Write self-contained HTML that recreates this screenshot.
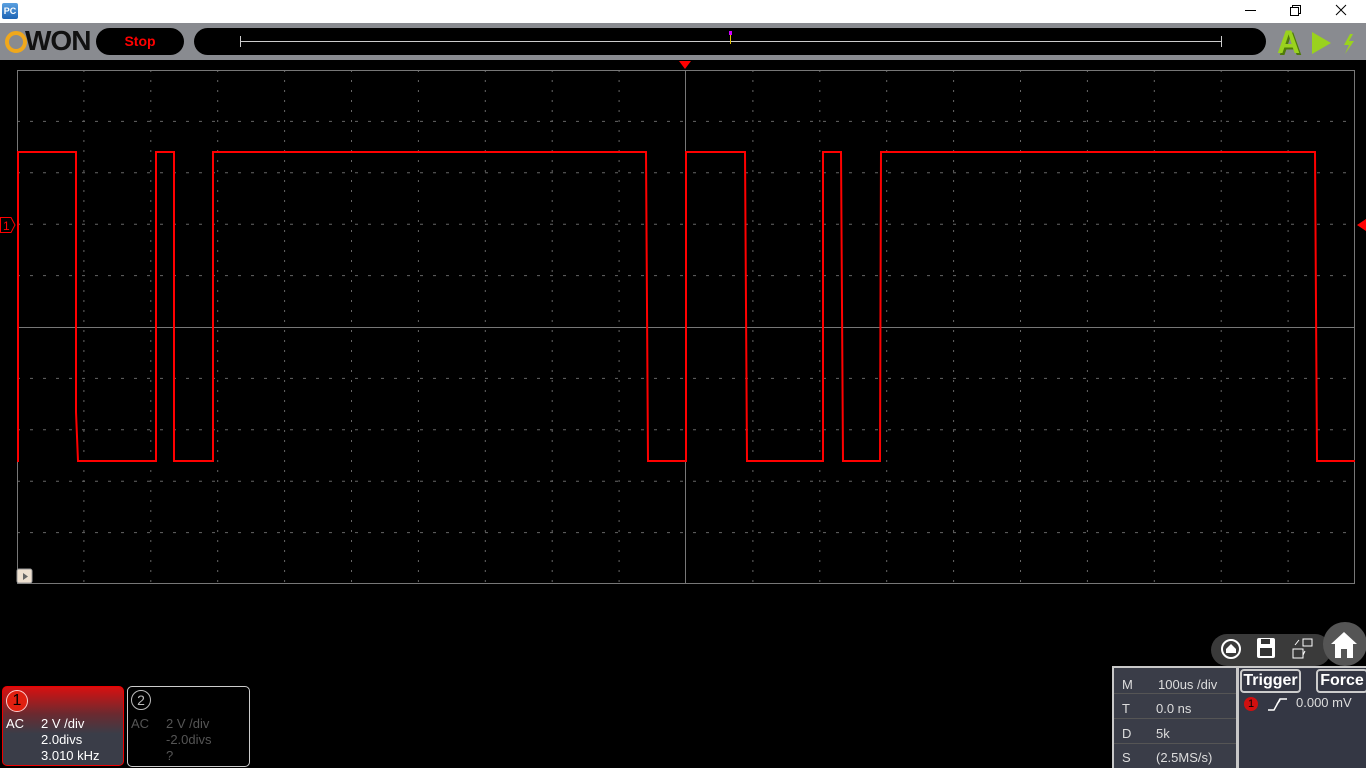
<!DOCTYPE html>
<html><head><meta charset="utf-8"><style>
body{margin:0;width:1366px;height:768px;background:#000;overflow:hidden;position:relative;font-family:"Liberation Sans",sans-serif}
.abs{position:absolute}
</style></head><body>
<!-- title bar -->
<div class="abs" style="left:0;top:0;width:1366px;height:23px;background:#fff"></div>
<div class="abs" style="left:2px;top:3px;width:16px;height:16px;background:linear-gradient(#5aa0e0,#1e64b4);border-radius:2px;color:#fff;font:bold 9px 'Liberation Sans';line-height:16px;text-align:center">PC</div>
<svg class="abs" style="left:1230px;top:0" width="136" height="23">
<line x1="15" y1="10.5" x2="26" y2="10.5" stroke="#000"/>
<rect x="60.5" y="7.5" width="8" height="8" fill="none" stroke="#000"/><path d="M62.5 7.5V5.5H70.5V13.5H68.5" fill="none" stroke="#000"/>
<path d="M106 5L116 15M116 5L106 15" stroke="#000"/>
</svg>
<!-- toolbar -->
<div class="abs" style="left:0;top:23px;width:1366px;height:37px;background:#898b90"></div>
<div class="abs" style="left:5px;top:31px;width:14px;height:14px;border:4px solid #f0a81c;border-radius:50%"></div>
<div class="abs" style="left:25px;top:25px;font:bold 28px 'Liberation Sans';color:#111;letter-spacing:-1px">WON</div>
<div class="abs" style="left:96px;top:28px;width:88px;height:27px;background:#000;border-radius:14px;color:#f00;font:bold 14px 'Liberation Sans';text-align:center;line-height:27px">Stop</div>
<div class="abs" style="left:194px;top:28px;width:1072px;height:27px;background:#000;border-radius:14px"></div>
<svg class="abs" style="left:230px;top:28px" width="1000" height="27">
<line x1="10" y1="13.5" x2="992" y2="13.5" stroke="#ccc"/>
<line x1="10.5" y1="8" x2="10.5" y2="19" stroke="#ccc"/><line x1="991.5" y1="8" x2="991.5" y2="19" stroke="#ccc"/>
<line x1="500.5" y1="4" x2="500.5" y2="16" stroke="#e0c000"/><rect x="499" y="3" width="3" height="4" fill="#c0f"/>
</svg>
<div class="abs" style="left:1277px;top:24px;font:bold 32px 'Liberation Sans';color:#9ad21e;text-shadow:2px 2px 0 #4f7a0a">A</div>
<svg class="abs" style="left:1310px;top:30px" width="56" height="26">
<path d="M2 2L21 13L2 24Z" fill="#9ad21e"/>
<path d="M40 4L34 15H39L35 24L44 11H39L43 4Z" fill="#9ad21e"/>
</svg>
<!-- scope screen -->
<svg class="abs" style="left:0;top:60px" width="1366" height="540">
<g stroke="#666" stroke-width="1" stroke-dasharray="2 8">
<line x1="83.9" y1="10" x2="83.9" y2="524"/><line x1="150.8" y1="10" x2="150.8" y2="524"/><line x1="217.7" y1="10" x2="217.7" y2="524"/><line x1="284.6" y1="10" x2="284.6" y2="524"/><line x1="351.5" y1="10" x2="351.5" y2="524"/><line x1="418.4" y1="10" x2="418.4" y2="524"/><line x1="485.3" y1="10" x2="485.3" y2="524"/><line x1="552.2" y1="10" x2="552.2" y2="524"/><line x1="619.1" y1="10" x2="619.1" y2="524"/><line x1="752.9" y1="10" x2="752.9" y2="524"/><line x1="819.8" y1="10" x2="819.8" y2="524"/><line x1="886.7" y1="10" x2="886.7" y2="524"/><line x1="953.6" y1="10" x2="953.6" y2="524"/><line x1="1020.5" y1="10" x2="1020.5" y2="524"/><line x1="1087.4" y1="10" x2="1087.4" y2="524"/><line x1="1154.3" y1="10" x2="1154.3" y2="524"/><line x1="1221.2" y1="10" x2="1221.2" y2="524"/><line x1="1288.1" y1="10" x2="1288.1" y2="524"/>
</g>
<g stroke="#666" stroke-width="1" stroke-dasharray="3 10">
<line x1="17" y1="61.4" x2="1355" y2="61.4"/><line x1="17" y1="112.8" x2="1355" y2="112.8"/><line x1="17" y1="164.2" x2="1355" y2="164.2"/><line x1="17" y1="215.6" x2="1355" y2="215.6"/><line x1="17" y1="318.4" x2="1355" y2="318.4"/><line x1="17" y1="369.8" x2="1355" y2="369.8"/><line x1="17" y1="421.2" x2="1355" y2="421.2"/><line x1="17" y1="472.6" x2="1355" y2="472.6"/>
</g>
<g stroke="#777" stroke-width="1" fill="none">
<rect x="17.5" y="10.5" width="1337" height="513"/>
<line x1="685.5" y1="10" x2="685.5" y2="524"/><line x1="17" y1="267.5" x2="1355" y2="267.5"/>
</g>
<polyline fill="none" stroke="#ff0000" stroke-width="2" points="18,402 18,92 76,92 76,352 78,401 156,401 156,92 174,92 174,401 213,401 213,92 646,92 648,401 686,401 686,92 745,92 747,401 823,401 823,92 841,92 843,401 880,401 881,92 1315,92 1317,401 1355,401"/>
<line x1="686" y1="260" x2="686" y2="310" stroke="#f00" stroke-width="2"/>
<path d="M679 1H691L685 9Z" fill="#f00"/>
<path d="M1366 159V171L1357 165Z" fill="#f00"/>
<path d="M0.5 157.5H11L15 165L11 172.5H0.5Z" fill="#000" stroke="#f00"/>
<text x="3" y="170" fill="#f00" font-size="12" font-family="Liberation Sans">1</text>
<rect x="17" y="509" width="15" height="14" rx="2" fill="#eee0d0" stroke="#999"/>
<path d="M23 513V520L28 516.5Z" fill="#666"/>
</svg>
<!-- icon bar -->
<div class="abs" style="left:1211px;top:634px;width:120px;height:32px;background:#3a3a3a;border-radius:16px"></div>
<div class="abs" style="left:1323px;top:622px;width:44px;height:44px;background:#555;border-radius:50%"></div>
<svg class="abs" style="left:1211px;top:622px" width="155" height="46">
<circle cx="20" cy="27" r="9" fill="none" stroke="#fff" stroke-width="2"/><path d="M15 27L20 22L25 27V31H15Z" fill="#fff"/>
<rect x="46" y="16" width="18" height="20" rx="2" fill="#fff"/><rect x="49" y="26" width="12" height="8" fill="#333"/><rect x="50" y="17" width="9" height="5" fill="#333"/>
<rect x="82" y="27" width="10" height="9" fill="none" stroke="#fff"/><rect x="92" y="17" width="9" height="7" fill="none" stroke="#fff"/><path d="M84 23L88 18M94 29L92 33" stroke="#fff"/>
<path d="M120 22L133 10L146 22H142V36H124V22Z" fill="#fff"/><rect x="130" y="27" width="6" height="9" fill="#555"/>
</svg>
<!-- info panel -->
<div class="abs" style="left:1112px;top:666px;width:254px;height:102px;background:#c8c8c8"></div>
<div class="abs" style="left:1114px;top:668px;width:122px;height:100px;background:#3a3d48"></div>
<div class="abs" style="left:1239px;top:668px;width:127px;height:100px;background:#343744"></div>
<div class="abs" style="left:1114px;top:693px;width:122px;height:1px;background:#555"></div>
<div class="abs" style="left:1114px;top:718px;width:122px;height:1px;background:#555"></div>
<div class="abs" style="left:1114px;top:743px;width:122px;height:1px;background:#555"></div>
<div class="abs" style="left:1114px;top:668px;width:122px;height:100px;color:#ddd;font-size:13px">
<div style="position:absolute;left:8px;top:9px">M</div><div style="position:absolute;left:44px;top:9px">100us /div</div>
<div style="position:absolute;left:8px;top:33px">T</div><div style="position:absolute;left:42px;top:33px">0.0 ns</div>
<div style="position:absolute;left:8px;top:58px">D</div><div style="position:absolute;left:42px;top:58px">5k</div>
<div style="position:absolute;left:8px;top:82px">S</div><div style="position:absolute;left:42px;top:82px">(2.5MS/s)</div>
</div>
<div class="abs" style="left:1240px;top:669px;width:57px;height:20px;border:2px solid #ccc;border-radius:4px;color:#fff;font:bold 16px 'Liberation Sans';text-align:center;line-height:20px">Trigger</div>
<div class="abs" style="left:1316px;top:669px;width:48px;height:20px;border:2px solid #ccc;border-radius:4px;color:#fff;font:bold 16px 'Liberation Sans';text-align:center;line-height:20px">Force</div>
<div class="abs" style="left:1244px;top:697px;width:14px;height:14px;background:#d01010;border-radius:50%;color:#000;font-size:11px;text-align:center;line-height:14px">1</div>
<svg class="abs" style="left:1266px;top:695px" width="24" height="18"><path d="M2 15H8L14 4H21M11 9L14 5" fill="none" stroke="#fff" stroke-width="1.5"/></svg>
<div class="abs" style="left:1296px;top:695px;color:#ddd;font-size:13px">0.000 mV</div>
<!-- channel boxes -->
<div class="abs" style="left:2px;top:686px;width:120px;height:78px;border:1px solid #e00;border-radius:5px;background:linear-gradient(#d81010 0%,#6a2a30 35%,#3a3d48 60%,#3a3d48)"></div>
<div class="abs" style="left:6px;top:690px;width:20px;height:20px;background:#e02010;border-radius:50%;border:1px solid #fcc;color:#000;font-size:16px;text-align:center;line-height:20px">1</div>
<div class="abs" style="left:6px;top:716px;color:#fff;font-size:13px;line-height:16px">AC</div>
<div class="abs" style="left:41px;top:716px;color:#fff;font-size:13px;line-height:16px">2 V /div<br>2.0divs<br>3.010 kHz</div>
<div class="abs" style="left:127px;top:686px;width:121px;height:79px;border:1px solid #ccc;border-radius:5px"></div>
<div class="abs" style="left:131px;top:690px;width:18px;height:18px;border:1px solid #bbb;border-radius:50%;color:#bbb;font-size:14px;text-align:center;line-height:18px">2</div>
<div class="abs" style="left:131px;top:716px;color:#555;font-size:13px;line-height:16px">AC</div>
<div class="abs" style="left:166px;top:716px;color:#555;font-size:13px;line-height:16px">2 V /div<br>-2.0divs<br>?</div>
</body></html>
